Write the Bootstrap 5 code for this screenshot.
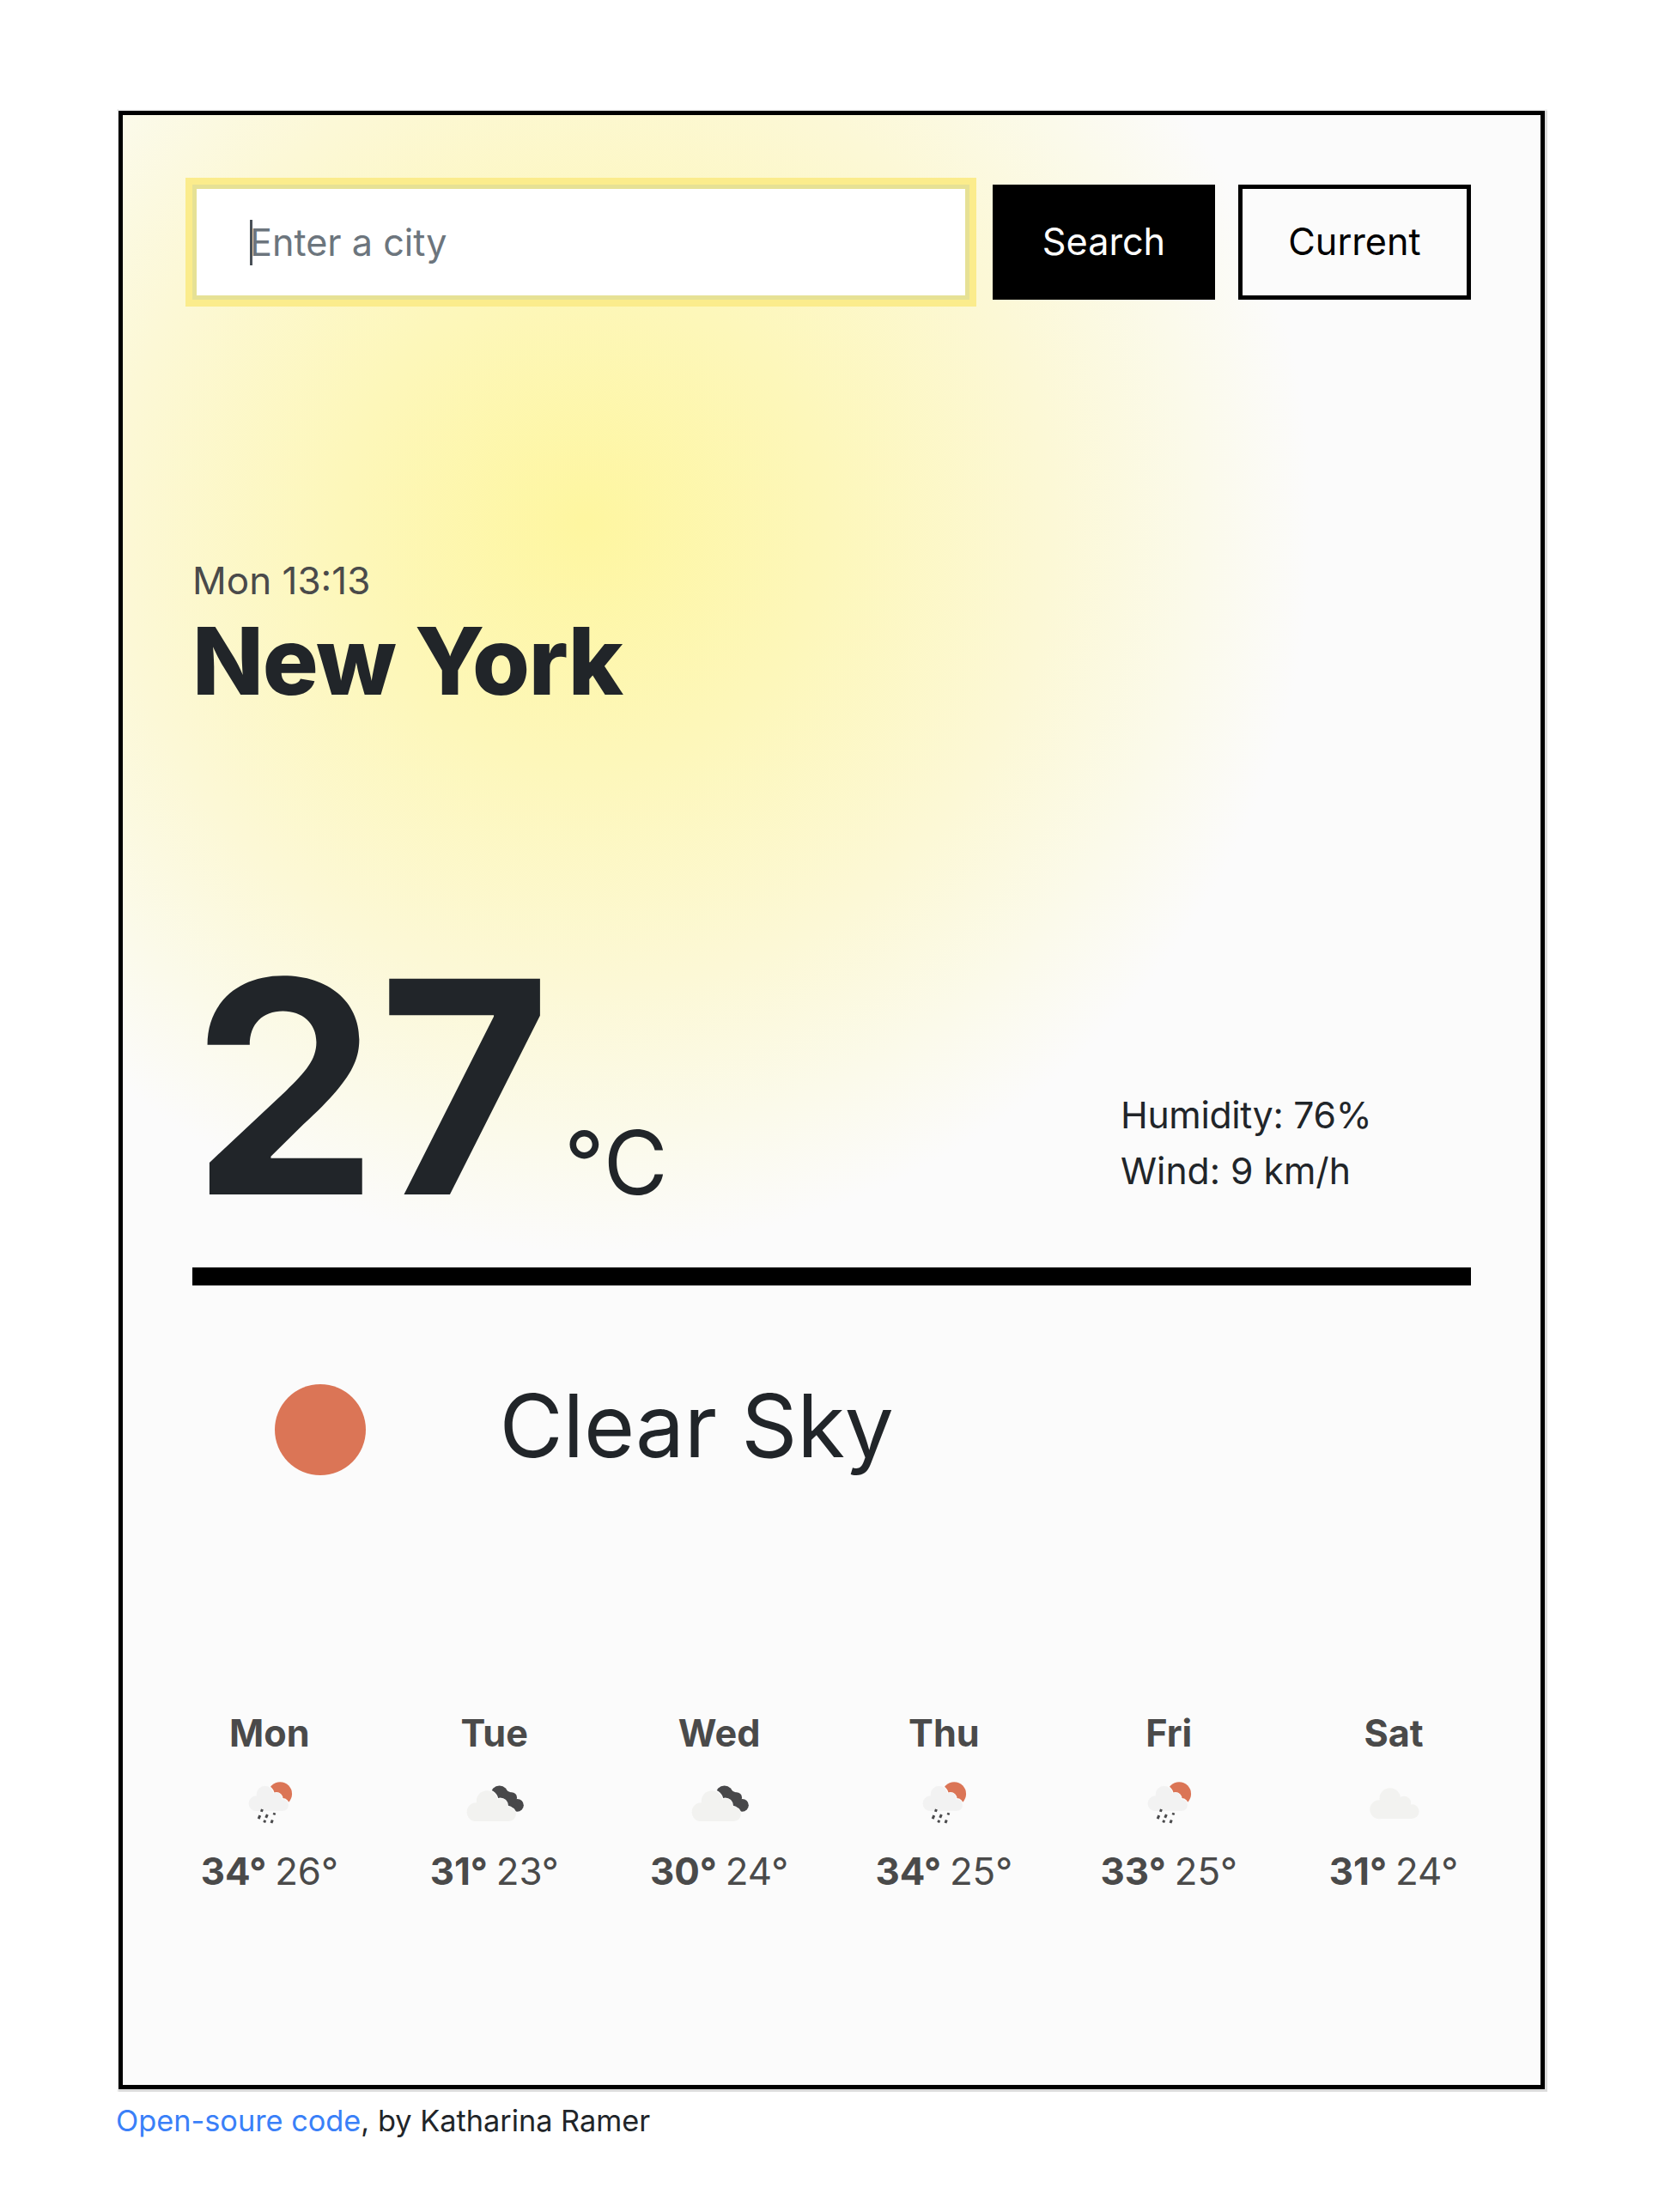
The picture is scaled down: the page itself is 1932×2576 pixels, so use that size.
<!DOCTYPE html>
<html lang="en">
<head>
<meta charset="utf-8">
<meta name="viewport" content="width=device-width, initial-scale=1">
<title>Weather app</title>
<link href="https://cdn.jsdelivr.net/npm/bootstrap@5.3.0/dist/css/bootstrap.min.css" rel="stylesheet">
<style>
  :root { --bs-body-font-family: Inter, "Liberation Sans", sans-serif; }
  body { font-size: 43.2px; line-height: 65px; color: #212529; background: #fff; }
  .weather-page { width: 1661px; margin: 129px 0 0 138px; }
  .weather-app {
    height: 2304px; padding: 81px 81px 0; border: 5px solid #000; border-radius: 0;
    background: radial-gradient(circle 850px at 537px 474px, #fef6a0 0%, #fdf7ba 33%, #fcf8d6 64%, #fbfaea 84%, #fbfbfb 100%) #fbfbfb;
    box-shadow: 0 0 1px 2.5px #dcdcdc;
  }
  .search-row { height: 134px; }
  .search-row .city-input {
    width: 905px; margin-right: 27px; padding: 0 0 0 62px; border: 5px solid #e6e195; border-radius: 0;
    background: #fff; box-shadow: 0 0 0 8px #fbec8c; color: #6c757d;
    display: flex; align-items: center; font-size: 43.2px; line-height: 65px;
  }
  .caret { width: 3px; height: 53px; background: #495057; margin-right: -3px; }
  .search-row .btn { border: 5px solid #000; border-radius: 0; font-size: 43.2px; line-height: 61px; padding: 0 0 2px; color: #000; }
  .search-row .btn-search { width: 259px; margin-right: 27px; background: #000; color: #fff; }
  .search-row .btn-current { width: 271px; background: #fbfbfb; }
  .overview { margin-top: 295px; }
  .muted-dark { color: #4a4a4a; }
  .local-time { font-size: 44px; }
  .city-name { font-size: 108.3px; line-height: 122px; font-weight: 800; letter-spacing: -1.2px; margin: 0; }
  .now-row { margin-top: 262px; height: 345px; }
  .now-degrees { font-size: 345.5px; line-height: 345px; font-weight: 700; margin-left: -1px; }
  .now-unit { font-size: 102.6px; line-height: 1; margin-left: 15.5px; }
  .details { width: 408px; padding-bottom: 42px; font-size: 42.7px; }
  .details .humidity { letter-spacing: -.3px; }
  .divider { height: 21px; margin: 38px 0 0; border: 0; background: #000; opacity: 1; }
  .summary { margin-top: 103px; height: 120px; }
  .sun { width: 106px; height: 106px; margin-left: 96px; margin-top: 9px; }
  .summary-text { font-size: 101.6px; line-height: 120px; margin-left: 155.5px; letter-spacing: -.2px; padding-top: 2px; }
  .forecast { margin: 266px -41px 0; }
  .forecast svg { display: block; width: 100px; height: 66px; margin: 16px auto 14px; }
  .temps { font-size: 43.8px; word-spacing: -2.5px; }
  .footer-note { font-size: 34.3px; line-height: 54px; margin: 10px 0 0 -3px; }
  .footer-note a { color: #3a80f8; text-decoration: none; }
</style>
<script src="https://cdn.jsdelivr.net/npm/bootstrap@5.3.0/dist/js/bootstrap.bundle.min.js"></script>
</head>
<body>
<svg width="0" height="0" class="position-absolute" aria-hidden="true">
  <defs>
    <g id="cloud-shape">
      <circle cx="33" cy="76" r="33"/><circle cx="71" cy="37" r="37"/><circle cx="121" cy="53" r="24"/><circle cx="148" cy="83" r="25.5"/>
      <path d="M33 60L71 40L125 45L150 80V108.500H33Z"/>
    </g>
    <symbol id="icon-rain" viewBox="0 0 300 200">
      <circle cx="187" cy="67" r="42" fill="#db7556"/>
      <g transform="translate(76 39) scale(.81)" fill="#fbfbfb" stroke="#fbfbfb" stroke-width="9"><circle cx="71" cy="37" r="37"/><circle cx="121" cy="55" r="24"/><circle cx="148" cy="83" r="25.500"/></g>
      <use href="#cloud-shape" transform="translate(76 39) scale(.81)" fill="#f2f2f2"/>
      <path d="M124 121l-3 9M116 143l-5 12M142 140l-5 11M134 160l-3 8M168 134l-3 7M160 159l-4 11" fill="none" stroke="#4a4a4c" stroke-width="9"/>
    </symbol>
    <symbol id="icon-broken" viewBox="0 0 300 200">
      <g fill="#48484a"><circle cx="167" cy="69" r="31"/><circle cx="210" cy="80" r="19"/><circle cx="230" cy="107" r="22.500"/><path d="M180 50L215 65L235 120L170 100Z"/></g>
      <g transform="translate(52 55)" fill="#fbfbfb" stroke="#fbfbfb" stroke-width="8"><circle cx="71" cy="37" r="37"/><circle cx="118" cy="53" r="24"/><circle cx="146" cy="85" r="25.500"/></g>
      <use href="#cloud-shape" transform="translate(52 55)" fill="#f2f2f0"/>
    </symbol>
    <symbol id="icon-cloud" viewBox="0 0 300 200">
      <use href="#cloud-shape" transform="translate(66 46)" fill="#f2f2f0"/>
    </symbol>
  </defs>
</svg>
<div class="weather-page">
  <main class="weather-app">
    <form class="search-row d-flex">
      <div class="city-input form-control flex-shrink-0" role="textbox"><span class="caret"></span><span>Enter a city</span></div>
      <button type="button" class="btn btn-search flex-shrink-0">Search</button>
      <button type="button" class="btn btn-current flex-shrink-0">Current</button>
    </form>
    <section class="overview">
      <div class="muted-dark local-time">Mon 13:13</div>
      <h1 class="city-name">New York</h1>
    </section>
    <section class="now-row d-flex justify-content-between align-items-end">
      <div class="d-flex align-items-baseline"><span class="now-degrees">27</span><span class="now-unit">°C</span></div>
      <div class="details"><div class="humidity">Humidity: 76%</div><div>Wind: 9 km/h</div></div>
    </section>
    <hr class="divider">
    <section class="summary d-flex align-items-center">
      <svg class="sun" viewBox="0 0 106 106"><circle cx="53" cy="53" r="53" fill="#db7556"/></svg>
      <div class="summary-text">Clear Sky</div>
    </section>
    <section class="forecast row g-0 text-center muted-dark">
      <div class="col-2"><div class="fw-bold">Mon</div><svg><use href="#icon-rain"/></svg><div class="temps"><strong>34°</strong> 26°</div></div>
      <div class="col-2"><div class="fw-bold">Tue</div><svg><use href="#icon-broken"/></svg><div class="temps"><strong>31°</strong> 23°</div></div>
      <div class="col-2"><div class="fw-bold">Wed</div><svg><use href="#icon-broken"/></svg><div class="temps"><strong>30°</strong> 24°</div></div>
      <div class="col-2"><div class="fw-bold">Thu</div><svg><use href="#icon-rain"/></svg><div class="temps"><strong>34°</strong> 25°</div></div>
      <div class="col-2"><div class="fw-bold">Fri</div><svg><use href="#icon-rain"/></svg><div class="temps"><strong>33°</strong> 25°</div></div>
      <div class="col-2"><div class="fw-bold">Sat</div><svg><use href="#icon-cloud"/></svg><div class="temps"><strong>31°</strong> 24°</div></div>
    </section>
  </main>
  <footer class="footer-note"><a href="#">Open-soure code</a>, by Katharina Ramer</footer>
</div>
</body>
</html>
